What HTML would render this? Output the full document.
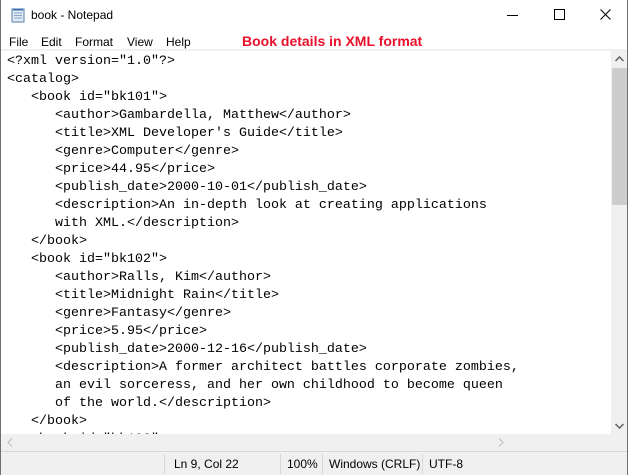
<!DOCTYPE html>
<html><head><style>
*{margin:0;padding:0;box-sizing:border-box}
body{width:628px;height:475px;overflow:hidden;background:#fff;font-family:"Liberation Sans",sans-serif;position:relative}
.win{position:absolute;left:0;top:0;width:628px;height:475px;border:1px solid #6f6f6f;border-top:none;background:#fff}
.title{position:absolute;top:0;left:0;width:626px;height:31px}
.title span{position:absolute;left:30px;top:8px;font-size:12px;color:#000}
.menu{position:absolute;top:31px;left:0;width:626px;height:19px;font-size:12px}
.menu span{position:absolute;top:4px}
.red{color:#e8102a;font-weight:bold;font-size:14px!important;top:2px!important}
.sep{position:absolute;top:49px;left:0;width:626px;height:2px;background:#f0f0f0}
.text{position:absolute;top:51px;left:0;width:610px;height:383px;overflow:hidden;font-family:"Liberation Mono",monospace;font-size:13.33px;line-height:18px;white-space:pre;padding-left:6px;padding-top:2px;color:#000}
.vs{position:absolute;left:610px;top:51px;width:16px;height:383px;background:#f0f0f0}
.thumb{position:absolute;left:611px;top:68px;width:15px;height:137px;background:#cdcdcd}
.hs{position:absolute;left:0;top:434px;width:626px;height:17px;background:#f0f0f0}
.status{position:absolute;left:0;top:451px;width:626px;height:24px;background:#f0f0f0;border-top:1px solid #d7d7d7;font-size:12px}
.status span{position:absolute;top:5px}
.vl{position:absolute;top:2px;width:1px;height:20px;background:#d7d7d7}
</style></head><body>
<div class="win">
<div class="title">
<svg style="position:absolute;left:9px;top:7px" width="16" height="16" viewBox="0 0 16 16"><rect x="2" y="2" width="12" height="13" fill="#dfeaf5" stroke="#5a7ea8"/><path d="M4 6h8M4 8.5h8M4 11h8" stroke="#8aa6c6"/><path d="M3 2.5h10" stroke="#3a6fb0" stroke-width="2"/></svg>
<span>book - Notepad</span>
<svg style="position:absolute;left:506px;top:15px" width="12" height="2"><rect width="11" height="1" fill="#000"/></svg>
<svg style="position:absolute;left:553px;top:9px" width="12" height="12"><rect x="0.5" y="0.5" width="10" height="10" fill="none" stroke="#000"/></svg>
<svg style="position:absolute;left:599px;top:9px" width="12" height="12"><path d="M0.5 0.5L10.5 10.5M10.5 0.5L0.5 10.5" stroke="#000"/></svg>
</div>
<div class="menu"><span style="left:8px">File</span><span style="left:40px">Edit</span><span style="left:74px">Format</span><span style="left:126px">View</span><span style="left:165px">Help</span><span class="red" style="left:241px">Book details in XML format</span></div>
<div class="sep"></div>
<div class="text">&lt;?xml version="1.0"?&gt;
&lt;catalog&gt;
   &lt;book id="bk101"&gt;
      &lt;author&gt;Gambardella, Matthew&lt;/author&gt;
      &lt;title&gt;XML Developer's Guide&lt;/title&gt;
      &lt;genre&gt;Computer&lt;/genre&gt;
      &lt;price&gt;44.95&lt;/price&gt;
      &lt;publish_date&gt;2000-10-01&lt;/publish_date&gt;
      &lt;description&gt;An in-depth look at creating applications
      with XML.&lt;/description&gt;
   &lt;/book&gt;
   &lt;book id="bk102"&gt;
      &lt;author&gt;Ralls, Kim&lt;/author&gt;
      &lt;title&gt;Midnight Rain&lt;/title&gt;
      &lt;genre&gt;Fantasy&lt;/genre&gt;
      &lt;price&gt;5.95&lt;/price&gt;
      &lt;publish_date&gt;2000-12-16&lt;/publish_date&gt;
      &lt;description&gt;A former architect battles corporate zombies,
      an evil sorceress, and her own childhood to become queen
      of the world.&lt;/description&gt;
   &lt;/book&gt;
   &lt;book id="bk103"&gt;</div>
<div class="vs"></div>
<div class="thumb"></div>
<svg style="position:absolute;left:614px;top:56px" width="9" height="6"><path d="M0.5 5L4.5 1L8.5 5" fill="none" stroke="#606060" stroke-width="1.5"/></svg>
<svg style="position:absolute;left:614px;top:423px" width="9" height="6"><path d="M0.5 1L4.5 5L8.5 1" fill="none" stroke="#606060" stroke-width="1.5"/></svg>
<div class="hs"></div>
<svg style="position:absolute;left:6px;top:438px" width="6" height="9"><path d="M5 0.5L1 4.5L5 8.5" fill="none" stroke="#c0c0c0" stroke-width="1.2"/></svg>
<svg style="position:absolute;left:497px;top:438px" width="6" height="9"><path d="M1 0.5L5 4.5L1 8.5" fill="none" stroke="#c0c0c0" stroke-width="1.2"/></svg>
<div class="status">
<div class="vl" style="left:163px"></div><div class="vl" style="left:279px"></div><div class="vl" style="left:321px"></div><div class="vl" style="left:421px"></div>
<span style="left:173px">Ln 9, Col 22</span><span style="left:286px">100%</span><span style="left:328px">Windows (CRLF)</span><span style="left:428px">UTF-8</span>
</div>
</div>
</body></html>
